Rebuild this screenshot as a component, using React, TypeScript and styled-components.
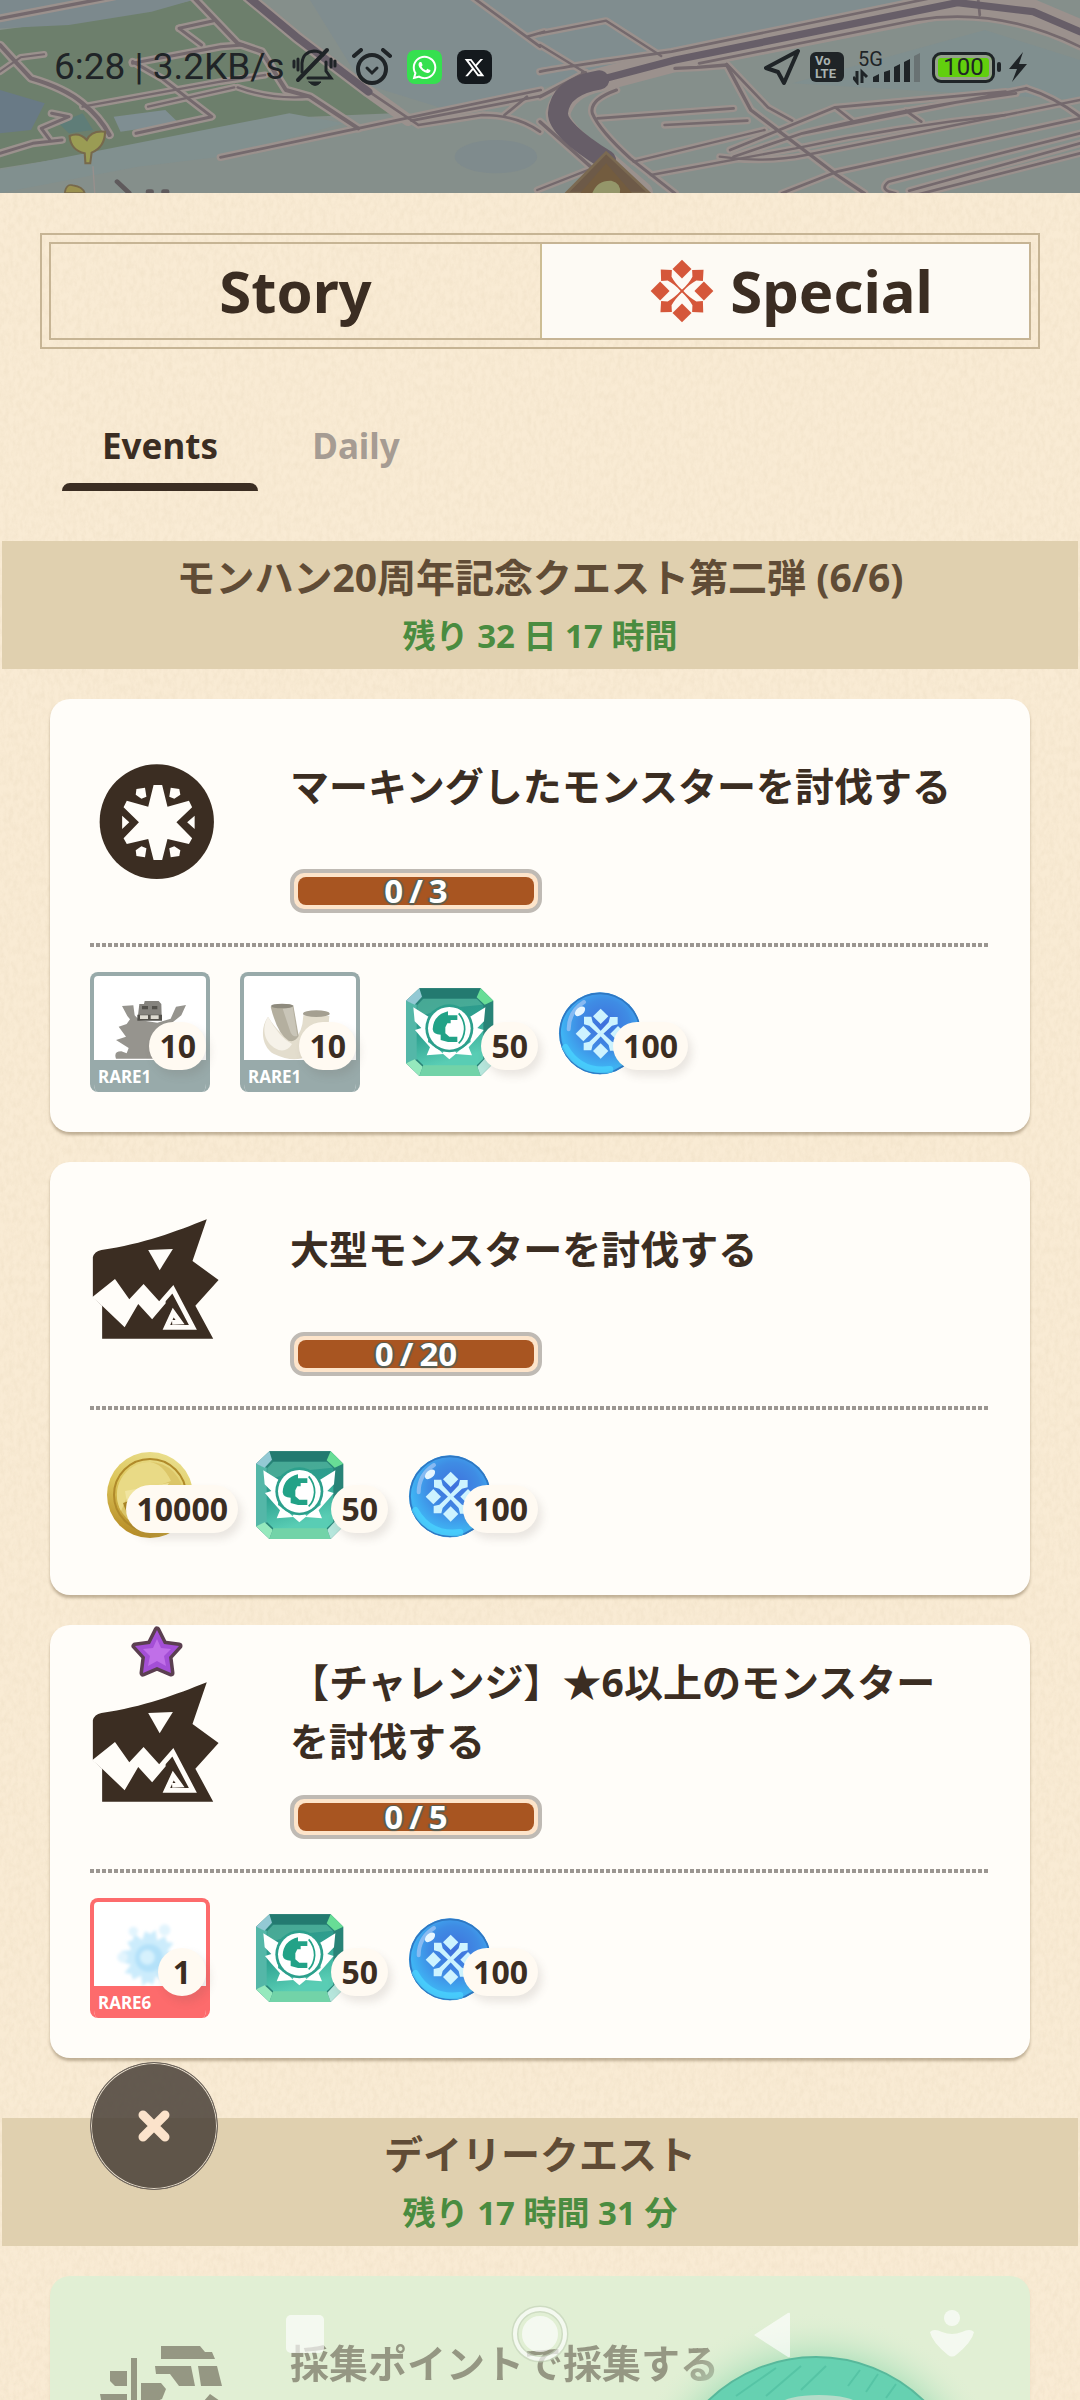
import React from "react";
import styled, { createGlobalStyle } from "styled-components";
import { FaWhatsapp } from "react-icons/fa";
import { RiTwitterXLine } from "react-icons/ri";

const ink = "#3b2d22";
const uiFont = `"Noto Sans", "Noto Sans CJK JP", sans-serif`;

const GlobalStyle = createGlobalStyle`
  *, *::before, *::after { box-sizing: border-box; }
  body { margin: 0; background: #f8ead1; font-family: ${uiFont}; color: ${ink}; }
  button { font: inherit; color: inherit; background: none; border: 0; padding: 0; cursor: pointer; }
  h2, h3, p, ul { margin: 0; padding: 0; }
  svg { display: block; }
`;

const Screen = styled.div`
  position: relative;
  display: flex;
  flex-direction: column;
  height: 100vh;
  overflow: hidden;
`;

const Header = styled.header`
  position: relative;
  flex: none;
  height: 193px;
  overflow: hidden;
  background: #838f8e;
`;

const MapArt = styled.svg`
  position: absolute;
  inset: 0;
  width: 100%;
  height: 100%;
`;

const StatusBar = styled.div`
  position: relative;
  display: flex;
  align-items: center;
  justify-content: space-between;
  padding: 46px 52px 0 54px;
  height: 88px;
  color: #1f2427;
  font-family: Roboto, sans-serif;
`;

const StatusGroup = styled.div<{ $gap: number }>`
  display: flex;
  align-items: center;
  gap: ${(p) => p.$gap}px;
`;

const Clock = styled.span`
  font-size: 37px;
  line-height: 44px;
  white-space: nowrap;
`;

const AppBadge = styled.span<{ $bg: string }>`
  display: grid;
  place-items: center;
  width: 35px;
  height: 34px;
  border-radius: 8px;
  color: #fff;
  background: ${(p) => p.$bg};
`;

const Volte = styled.span`
  display: grid;
  align-content: center;
  width: 34px;
  height: 30px;
  padding-left: 5px;
  border-radius: 6px;
  background: #1f2427;
  color: #a9b2b0;
  font: 700 13px/13px Roboto, sans-serif;
`;

const Network = styled.span`
  position: relative;
  display: block;
  width: 70px;
  height: 36px;
`;

const NetworkLabel = styled.span`
  position: absolute;
  left: 5px;
  top: 0;
  font-size: 20px;
  line-height: 20px;
`;

const Battery = styled.span`
  display: flex;
  align-items: center;
  gap: 2px;

  &::after {
    content: "";
    width: 4px;
    height: 10px;
    border-radius: 2px;
    background: #1f2427;
  }
`;

const BatteryCell = styled.span`
  display: grid;
  place-items: center;
  width: 63px;
  height: 31px;
  border: 3px solid #1f2427;
  border-radius: 9px;
  background: #62cf0d;
  box-shadow: inset 0 0 0 3px #96a08e;
  font-size: 24px;
  line-height: 24px;
`;

const Panel = styled.main`
  position: relative;
  flex: 1;
  min-height: 0;
  display: flex;
  flex-direction: column;
  background: #f9ebd4;
`;

const PaperGrain = styled.svg`
  position: absolute;
  inset: 0;
  width: 100%;
  height: 100%;
  pointer-events: none;
`;

const ModeFrame = styled.div`
  position: relative;
  flex: none;
  margin: 40px 40px 0;
  padding: 7px;
  border: 2px solid #c6b494;
`;

const ModeTabs = styled.div`
  display: grid;
  grid-template-columns: 1fr 1fr;
  border: 2px solid #c6b494;
`;

const ModeTab = styled.button<{ $active?: boolean }>`
  display: flex;
  align-items: center;
  justify-content: center;
  gap: 16px;
  height: 94px;
  font-size: 58px;
  font-weight: 700;
  line-height: 94px;
  background: ${(p) => (p.$active ? "#fdfaf4" : "transparent")};

  & + & {
    border-left: 2px solid #cdbd93;
  }

  & > svg {
    margin-left: 12px;
  }
`;

const SubTabs = styled.nav`
  position: relative;
  flex: none;
  display: flex;
  padding: 0 62px;
  margin: 60px 0 50px;
`;

const SubTab = styled.button<{ $active?: boolean }>`
  min-width: 196px;
  font-size: 35px;
  font-weight: 700;
  line-height: 74px;
  color: ${(p) => (p.$active ? ink : "#a69c93")};

  &::after {
    content: "";
    display: block;
    height: 8px;
    border-radius: 12px 12px 0 0;
    background: ${(p) => (p.$active ? ink : "transparent")};
  }
`;

const QuestScroll = styled.div`
  position: relative;
  flex: 1;
  min-height: 0;
  overflow-y: auto;
  scrollbar-width: none;
`;

const Group = styled.section`
  & + & {
    margin-top: 60px;
  }
`;

const Banner = styled.header`
  margin: 0 2px;
  padding: 6px 16px 4px;
  background: #e0d0af;
  text-align: center;
`;

const BannerTitle = styled.h2`
  font-size: 39px;
  font-weight: 700;
  line-height: 59px;
  color: #604c36;
`;

const TimeLeft = styled.p`
  font-size: 33px;
  font-weight: 700;
  line-height: 59px;
  color: #4a8c40;
`;

const CardList = styled.ul`
  display: grid;
  gap: 30px;
  padding: 30px 50px 0;
  list-style: none;
`;

const Card = styled.li<{ $done?: boolean }>`
  padding: 27px 42px 40px 40px;
  border-radius: 20px;
  background: ${(p) => (p.$done ? "#e1efd4" : "#fffdf9")};
  box-shadow: 0 3px 3px ${(p) => (p.$done ? "rgba(120, 100, 70, 0.1)" : "rgba(110, 90, 60, 0.4)")};

  & > * {
    opacity: ${(p) => (p.$done ? 0.45 : 1)};
  }
`;

const CardTop = styled.div`
  display: grid;
  grid-template-columns: 134px 1fr;
  column-gap: 66px;
  padding-bottom: 34px;
  background: repeating-linear-gradient(90deg, #9b9691 0 4px, transparent 4px 6px) left bottom / 100% 4px no-repeat;
`;

const QuestIcon = styled.div`
  position: relative;
  padding-top: 29px;
`;

const ChallengeStar = styled.svg`
  position: absolute;
  left: 39px;
  top: -27px;
`;

const QuestBody = styled.div`
  display: flex;
  flex-direction: column;
  gap: 25px;
  padding-right: 22px;
`;

const QuestTitle = styled.h3`
  display: flex;
  align-items: center;
  min-height: 118px;
  font-size: 39px;
  font-weight: 700;
  line-height: 59px;
`;

const Meter = styled.div`
  display: grid;
  width: 252px;
  height: 44px;
  padding: 4px;
  border: 4px solid #bfbab4;
  border-radius: 14px;
  background: #fde4ca;
`;

const MeterFill = styled.div`
  display: flex;
  align-items: center;
  justify-content: center;
  gap: 6px;
  border-radius: 8px;
  background: #a85521;
  color: #fff;
  font-size: 33px;
  font-weight: 700;
  line-height: 28px;
  text-shadow: 0 2px 1px #555f55, 2px 0 1px #555f55, -2px 0 1px #555f55, 0 -1px 1px #555f55;
`;

const Rewards = styled.div`
  display: flex;
  padding-top: 25px;
`;

const Slot = styled.div`
  position: relative;
  width: 150px;
  height: 120px;
`;

const Art = styled.svg`
  width: 120px;
  height: 120px;
`;

const Tile = styled.div<{ $tone: string }>`
  display: flex;
  flex-direction: column;
  width: 120px;
  height: 120px;
  overflow: hidden;
  border: 4px solid ${(p) => p.$tone};
  border-bottom: 0;
  border-radius: 8px;
  background: #fff;
`;

const TileArt = styled.svg`
  width: 112px;
  height: 84px;
`;

const Rarity = styled.span<{ $tone: string }>`
  height: 32px;
  padding-left: 4px;
  background: ${(p) => p.$tone};
  color: #fff;
  font-size: 17px;
  font-weight: 700;
  line-height: 34px;
`;

const Count = styled.span<{ $inset: number }>`
  position: absolute;
  right: ${(p) => p.$inset}px;
  bottom: 22px;
  min-width: 48px;
  padding: 0 10px;
  border-radius: 24px;
  background: #fffaf2;
  box-shadow: 4px 6px 8px rgba(90, 80, 70, 0.13);
  font-size: 32px;
  font-weight: 700;
  line-height: 48px;
  text-align: center;
`;

const CloseButton = styled.button`
  position: absolute;
  left: 90px;
  bottom: 210px;
  display: grid;
  place-items: center;
  width: 128px;
  height: 128px;
  border: 1px solid #6b625a;
  border-radius: 50%;
  background: rgba(66, 57, 50, 0.82);
  box-shadow: inset 0 0 0 1px #e6dccb;
`;

const MapOrb = styled.svg`
  position: absolute;
  right: 64px;
  bottom: 0;
  width: 400px;
  height: 100px;
`;

const SystemNav = styled.nav`
  position: absolute;
  left: 0;
  right: 0;
  bottom: 36px;
  display: grid;
  grid-template-columns: 234fr 236fr 228fr 132fr;
  justify-items: center;
  padding: 0 62px 0 188px;
  opacity: 0.66;
`;

const NavButton = styled.button`
  width: 60px;
  height: 60px;
`;

type ArtKind = "fossil" | "bone" | "flower" | "gem" | "orb" | "coin";
type Reward = { art: ArtKind; count: number; rare?: number };
type Quest = { title: string; icon: "mark" | "monster" | "gather"; goal?: number; star?: boolean; done?: boolean; rewards: Reward[] };

const groups: { title: string; left: string; quests: Quest[] }[] = [
  {
    title: "モンハン20周年記念クエスト第二弾 (6/6)",
    left: "残り 32 日 17 時間",
    quests: [
      {
        title: "マーキングしたモンスターを討伐する",
        icon: "mark",
        goal: 3,
        rewards: [
          { art: "fossil", count: 10, rare: 1 },
          { art: "bone", count: 10, rare: 1 },
          { art: "gem", count: 50 },
          { art: "orb", count: 100 },
        ],
      },
      {
        title: "大型モンスターを討伐する",
        icon: "monster",
        goal: 20,
        rewards: [
          { art: "coin", count: 10000 },
          { art: "gem", count: 50 },
          { art: "orb", count: 100 },
        ],
      },
      {
        title: "【チャレンジ】★6以上のモンスターを討伐する",
        icon: "monster",
        goal: 5,
        star: true,
        rewards: [
          { art: "flower", count: 1, rare: 6 },
          { art: "gem", count: 50 },
          { art: "orb", count: 100 },
        ],
      },
    ],
  },
  {
    title: "デイリークエスト",
    left: "残り 17 時間 31 分",
    quests: [{ title: "採集ポイントで採集する", icon: "gather", done: true, rewards: [] }],
  },
];

function Map() {
  const roads: [string, number][] = [
    ["M0 135 L40 180 L90 235 Q190 265 240 310 Q290 350 318 405", 12],
    ["M0 55 L330 -10", 10],
    ["M0 215 L60 172 L128 163", 6],
    ["M560 -10 L690 130 L760 155 L830 270 L900 290 L1040 385", 12],
    ["M385 190 L640 140 L705 135 M520 85 L620 62 M520 85 L585 135", 9],
    ["M240 320 L640 245 L770 225 M430 320 L680 262", 7],
    ["M385 185 L470 235 L615 350 L395 400", 9],
    ["M0 460 L95 430 L180 420 M150 340 L200 350 L120 385 L145 420", 9],
    ["M690 262 Q790 300 900 290", 7],
    ["M640 472 L1040 385 L1570 270 M1195 362 L1570 288", 8],
    ["M1050 260 L1215 375 L1400 345 Q1500 345 1568 395 M1465 345 L1530 290", 8],
    ["M1370 -10 L1568 140 M1530 110 L1580 95", 8],
    ["M1568 100 L1760 62 L1920 168 M1568 135 L1700 218 L1690 218", 7],
    ["M1960 205 L2024 202 L2110 195 L2180 330 L2430 525 L2510 580", 10],
    ["M2110 192 L2230 322 L2300 362 M1735 355 L2130 325 M1930 375 L2170 362", 8],
    ["M1568 290 L1700 218 M1568 365 L1720 505", 10],
    ["M1790 270 Q1710 300 1720 340 Q1740 390 1830 475 L1960 580", 9],
    ["M1840 485 L2220 390 M1890 525 L2310 445 Q2600 380 2920 345 M1720 505 L1560 570", 7],
    ["M2120 450 L2425 322 L2920 275 M2130 470 L2330 400 L2980 265 M2330 400 Q2600 330 2950 280 M2425 322 L2475 362 M2630 332 L2675 365", 8],
    ["M2090 470 Q2220 490 2340 465 L3136 300", 7],
    ["M2270 580 L2430 515 L3136 355 M2600 580 Q2550 570 2580 545 L3136 400 M2640 572 L3136 430 M2640 590 L3136 460", 8],
    ["M1568 215 Q1640 200 1950 155 L2700 -5 M2030 190 L2660 60 Q2900 20 3136 140 M2840 -5 L2845 45", 8],
    ["M2980 265 Q3060 290 3136 350", 9],
  ];
  return (
    <MapArt viewBox="0 0 3136 579" preserveAspectRatio="none" aria-hidden="true">
      <rect width="3136" height="579" fill="#858f8b" />
      <path d="M900 0 H2700 L2000 160 L1300 330 L1050 250 Z" fill="#808d8f" />
      <path d="M2300 250 L2860 90 L3136 180 V300 Z" fill="#808f8f" />
      <path d="M0 90 L440 30 L560 0 L720 0 L1140 340 L900 350 L700 390 L0 505 Z" fill="#6d7f6c" />
      <path d="M0 0 H560 L440 35 L200 75 L0 85 Z" fill="#7c898d" />
      <path d="M0 270 L130 310 L90 390 L0 400 Z" fill="#697a86" />
      <path d="M330 350 L480 330 L520 370 L350 395 Z" fill="#7f8e92" />
      <path d="M170 370 L240 340 L270 390 L200 400 Z" fill="#5f7d78" />
      <path d="M0 510 L840 340 L1000 370 L640 470 L400 500 L0 579 Z" fill="#81908f" />
      <ellipse cx="1440" cy="470" rx="120" ry="50" fill="#7f8b8d" />
      <g fill="none" strokeLinecap="round" strokeLinejoin="round">
        {roads.map(([d, w]) => (
          <path key={d} d={d} stroke="#9b918d" strokeWidth={w + 14} />
        ))}
        <path d="M720 -10 L860 110 L1070 275 L1185 360" stroke="#9b918d" strokeWidth="36" />
        <path d="M3136 95 L3000 35 L2800 8 L1960 180 L1740 240 Q1640 260 1620 340 Q1620 400 1760 490 L1860 579" stroke="#9b918d" strokeWidth="72" />
        {roads.map(([d, w]) => (
          <path key={d} d={d} stroke="#74696d" strokeWidth={w} />
        ))}
        <path d="M720 -10 L860 110 L1070 275" stroke="#675e68" strokeWidth="23" />
        <path d="M3136 95 L3000 35 L2780 8 L1960 180 L1740 240" stroke="#675e68" strokeWidth="22" />
        <path d="M1740 240 Q1625 260 1620 340 Q1620 390 1760 480" stroke="#675e68" strokeWidth="58" />
        <path d="M270 500 L275 579" stroke="#98908d" strokeWidth="4" />
        <path d="M340 545 L375 579 M430 575 h10 M475 575 h10" stroke="#5f5a5c" strokeWidth="14" />
      </g>
      <path d="M202 408 Q230 395 252 420 Q265 390 305 395 Q305 440 266 458 L262 490 H248 L246 460 Q205 450 202 408Z" fill="#9a9c54" stroke="#77694c" strokeWidth="6" />
      <path d="M188 579 Q192 550 212 556 Q240 560 246 579Z" fill="#9a9150" stroke="#77694c" strokeWidth="5" />
      <path d="M1645 579 L1760 458 L1885 579Z" fill="#6d5a48" stroke="#7b6a52" strokeWidth="8" />
      <path d="M1685 579 L1760 490 L1835 579Z" fill="#735c3f" />
      <path d="M1720 579 Q1735 540 1775 542 Q1805 550 1800 579Z" fill="#94966a" />
    </MapArt>
  );
}

function Emblem({ size }: { size: number }) {
  return (
    <svg width={size} height={size} viewBox="-98 -98 196 196" fill="#d5573a" aria-hidden="true">
      {[0, 90, 180, 270].map((r) => (
        <g key={r} transform={`rotate(${r})`}>
          <path d="M0 -96 L29 -67 L0 -38 L-29 -67Z" />
          <path d="M-65 -66 L-31 -64 L-32 -44 Q-22 -24 2 -2 L-2 2 Q-24 -22 -44 -32 L-64 -31Z" />
        </g>
      ))}
    </svg>
  );
}

function MonsterIcon() {
  return (
    <svg width="134" height="134" viewBox="0 0 134 134" aria-hidden="true">
      <g transform="translate(-50 -58) scale(.35714 .33333)">
        <path d="M148 412 V292 Q152 274 172 270 C290 252 380 215 467 178 L427 303 L500 360 L435 437 L485 536 H174 V437Z" fill={ink} />
        <path d="M146 412 L210 357 L250 418 L290 372 L335 425 L350 410 L352 430 L314 478 L275 432 L237 502 L174 437Z" fill="#fffdf9" />
        <path d="M328 442 L372 388 L428 502 H354 L373 458 L392 486 L370 487" fill="none" stroke="#fffdf9" strokeWidth="14" />
        <path d="M303 270 L372 267 L335 331Z" fill="#fffdf9" />
      </g>
    </svg>
  );
}

function MarkIcon() {
  return (
    <svg width="134" height="134" viewBox="0 0 134 134" aria-hidden="true">
      <g transform="translate(-50 -65) scale(.35714 .33333)">
        <ellipse cx="327" cy="395" rx="160" ry="172" fill={ink} />
        <g fill="#fffdf9">
          <path d="M318 285 H342 L357 350 L417 332 L426 352 L382 397 L426 445 L417 462 L357 447 L342 510 H318 L303 447 L243 462 L234 445 L277 397 L234 352 L243 332 L303 350Z" />
          <path d="M270 297 L294 293 L298 320 L284 326 L268 314Z M366 293 L390 297 L393 314 L376 326 L362 320Z M270 498 L294 502 L298 475 L284 469 L268 481Z M366 502 L390 498 L393 481 L376 469 L362 475Z" />
          <path d="M230 377 L250 397 L230 417Z M433 377 L412 397 L433 417Z" />
        </g>
      </g>
    </svg>
  );
}

function GatherIcon() {
  return (
    <svg width="134" height="134" viewBox="0 0 134 134" fill={ink} aria-hidden="true">
      <path d="M71 14 H110 L115 20 H122 L125 27 H71Z M65 34 H101 L105 54 H89 L80 42 H66Z M108 34 H127 L132 54 H111Z M41 26 h6 v80 h-6Z M20 39 H37 V54 H25 L20 49Z M51 51 H71 L76 57 L72 67 L60 72 H51Z M10 62 H37 V84 H14Z M120 62 L140 76 L128 100 L106 78Z M51 78 H100 V100 H51Z" />
    </svg>
  );
}

function RewardArt({ kind }: { kind: ArtKind }) {
  if (kind === "fossil") {
    return (
      <TileArt viewBox="0 0 336 252" aria-hidden="true">
        <path d="M84 90 L118 88 L122 118 L136 132 L190 140 L230 128 L246 92 L276 87 L262 118 L232 142 L210 190 L180 248 H66 Q58 226 82 226 L98 232 L104 216 L66 192 L96 182 L74 152 L98 144 L108 130 L100 120 Z" fill="#96948e" />
        <path d="M136 84 L150 84 L152 75 L194 75 L202 84 L203 118 L132 118Z" fill="#85837e" />
        <path d="M144 90 h18 v10 h-18Z M174 90 h16 v10 h-16Z M130 116 h74 v18 h-74Z" fill="#53514c" />
        <path d="M138 118 h24 v11 h-24Z M170 118 h24 v11 h-24Z" fill="#dedbd2" />
      </TileArt>
    );
  }
  if (kind === "bone") {
    return (
      <TileArt viewBox="0 0 336 252" aria-hidden="true">
        <path d="M72 122 C46 158 54 214 90 234 Q150 262 190 240 Q252 210 256 120 L178 118 Q176 170 150 190 Q112 186 72 122Z" fill="#e3ddcd" />
        <path d="M72 122 C50 160 62 204 104 222 Q130 228 144 204 Q106 184 72 122Z" fill="#f6f2e9" />
        <path d="M80 92 Q108 78 148 88 L164 180 Q152 200 134 194 Q100 174 80 92Z" fill="#b4af9f" />
        <path d="M116 98 L146 92 L160 180 Q148 184 140 170Z" fill="#c9c5b8" />
        <ellipse cx="114" cy="90" rx="33" ry="7" fill="#8e8a7d" />
        <ellipse cx="217" cy="113" rx="40" ry="10" fill="#a49f91" />
      </TileArt>
    );
  }
  if (kind === "flower") {
    return (
      <TileArt viewBox="0 0 336 252" aria-hidden="true">
        <defs>
          <filter id="petalGlow" x="-20%" y="-20%" width="140%" height="140%">
            <feGaussianBlur stdDeviation="5" />
          </filter>
        </defs>
        <g filter="url(#petalGlow)" fill="#ccecfc">
          {[0, 45, 90, 135, 180, 225, 270, 315].map((r) => (
            <path key={r} transform={`translate(165 168) rotate(${r})`} d="M-26 -36 L-12 -80 L4 -72 L20 -84 L26 -36Z" />
          ))}
          <circle cx="118" cy="88" r="14" fill="#e2f4fd" />
          <circle cx="212" cy="84" r="17" fill="#e2f4fd" />
          <circle cx="86" cy="166" r="16" fill="#e2f4fd" />
          <circle cx="165" cy="168" r="42" fill="#b4e1f9" />
          <circle cx="160" cy="166" r="22" fill="#d6f1fd" />
        </g>
      </TileArt>
    );
  }
  if (kind === "gem") {
    return (
      <Art viewBox="0 0 120 120" aria-hidden="true">
        <defs>
          <linearGradient id="gemBody" x1="0" y1="0" x2="0.3" y2="1">
            <stop offset="0" stopColor="#2f9186" />
            <stop offset="0.5" stopColor="#2da190" />
            <stop offset="1" stopColor="#59cdb4" />
          </linearGradient>
        </defs>
        <g transform="translate(-10 -32) scale(.33333)">
          <path d="M118 145 H302 L340 182 V370 L302 408 H118 L78 370 V182Z" fill="#288377" />
          <path d="M118 145 H302 L290 178 H130Z" fill="#237a70" />
          <path d="M78 182 L112 195 V358 L78 370Z" fill="#54b7a8" />
          <path d="M118 408 L130 375 H290 L302 408Z" fill="#72d3a8" />
          <path d="M130 176 H290 L310 196 V356 L290 376 H130 L110 356 V196Z" fill="url(#gemBody)" />
          <path d="M130 176 H290 L308 194 L200 205 L112 230 V196Z" fill="#55b39d" opacity=".65" />
          <path d="M78 182 L118 145 L126 170 L104 194Z" fill="#93c9d4" />
          <path d="M302 145 L340 182 L314 194 L290 172Z" fill="#68dd96" />
          <path d="M78 370 L104 358 L128 380 L118 408Z" fill="#95e9bd" />
          <path d="M340 370 L314 356 L292 380 L302 408Z" fill="#b6e6dc" />
          <g fill="#fff">
            <path d="M100 202 L148 232 L144 306 L178 330 L190 342 L140 346 L150 322 L122 290 L105 270 L124 264 L104 244Z" />
            <path d="M316 202 L268 232 L272 306 L240 330 L226 342 L276 346 L266 322 L294 290 L311 270 L292 264 L312 244Z" />
            <path d="M208 312 L230 340 L208 358 L187 340Z" />
          </g>
          <circle cx="208" cy="265" r="72" fill="#2c9f8c" />
          <circle cx="208" cy="265" r="64" fill="#fff" />
          <path d="M204 214 Q160 225 158 268 Q160 284 182 284 V300 L204 306 H232 V290 H208 L196 280 V262 L202 250 H212 V240 H232 V226 H204Z" fill="#22a287" />
          <path d="M236 220 Q254 240 254 268 Q252 296 236 310" fill="none" stroke="#22a287" strokeWidth="5" />
        </g>
      </Art>
    );
  }
  if (kind === "orb") {
    return (
      <Art viewBox="0 0 120 120" aria-hidden="true">
        <defs>
          <radialGradient id="orbBody" cx="0.55" cy="0.4" r="0.62">
            <stop offset="0" stopColor="#3f6fdc" />
            <stop offset="0.5" stopColor="#3f8ce4" />
            <stop offset="0.85" stopColor="#3fb4f4" />
            <stop offset="1" stopColor="#3b9be0" />
          </radialGradient>
        </defs>
        <g transform="translate(-160 -32) scale(.33333)">
          <circle cx="660" cy="280" r="123" fill="url(#orbBody)" />
          <circle cx="660" cy="280" r="120" fill="none" stroke="#2f77c2" strokeWidth="5" />
          <path d="M556 322 Q600 400 690 388" fill="none" stroke="#4bd6ff" strokeWidth="20" opacity=".7" strokeLinecap="round" />
          <path d="M566 268 Q566 215 612 186" fill="none" stroke="#9ac2f4" strokeWidth="12" opacity=".8" strokeLinecap="round" />
          <ellipse cx="600" cy="214" rx="18" ry="11" transform="rotate(-42 600 214)" fill="#e6f6ff" />
          <g transform="translate(662 281)" fill="#cdf3ff">
            {[0, 90, 180, 270].map((r) => (
              <g key={r} transform={`rotate(${r})`}>
                <path d="M0 -75 L23 -52 L0 -29 L-23 -52Z" />
                <path d="M-50 -51 H-28 L-24 -34 L4 -4 L-4 4 L-34 -24 L-50 -28Z" />
              </g>
            ))}
          </g>
        </g>
      </Art>
    );
  }
  return (
    <Art viewBox="0 0 120 120" aria-hidden="true">
      <defs>
        <linearGradient id="coinBody" x1="0.7" y1="0" x2="0.3" y2="1">
          <stop offset="0" stopColor="#eadf8e" />
          <stop offset="0.5" stopColor="#dcc55a" />
          <stop offset="1" stopColor="#b78c25" />
        </linearGradient>
      </defs>
      <circle cx="60" cy="60" r="43" fill="url(#coinBody)" />
      <circle cx="60" cy="60" r="36" fill="none" stroke="#b08a2a" strokeWidth="2" />
      <circle cx="60" cy="60" r="33" fill="#dcc668" />
      <path d="M60 27 A33 33 0 0 0 31 76 L37 62 L81 46 Q73 29 60 27Z" fill="#e9da86" />
      <path d="M35 56 L79 48 L67 66 L37 68Z" fill="#f1e5a0" />
      <path d="M33 68 L51 62 L57 92 Q39 88 33 68Z" fill="#a98425" />
    </Art>
  );
}

const rareTone: Record<number, string> = { 1: "#98aaaa", 6: "#fd6b6c" };

function RewardItem({ reward }: { reward: Reward }) {
  const tone = reward.rare ? rareTone[reward.rare] : "";
  return (
    <Slot>
      {reward.rare ? (
        <Tile $tone={tone}>
          <RewardArt kind={reward.art} />
          <Rarity $tone={tone}>RARE{reward.rare}</Rarity>
        </Tile>
      ) : (
        <RewardArt kind={reward.art} />
      )}
      <Count $inset={reward.rare ? 34 : 2}>{reward.count}</Count>
    </Slot>
  );
}

function QuestCard({ quest }: { quest: Quest }) {
  return (
    <Card $done={quest.done}>
      <CardTop>
        <QuestIcon>
          {quest.star && (
            <ChallengeStar width="56" height="56" viewBox="0 0 56 56" aria-hidden="true">
              <path d="M28 5 L35 19 L50 21 L40 32 L42 48 L28 42 L14 48 L16 32 L6 21 L21 19Z" fill="#a44fd6" stroke="#5b3f50" strokeWidth="7" strokeLinejoin="round" />
              <path d="M28 5 L35 19 L50 21 L40 32 L42 48 L28 42 L14 48 L16 32 L6 21 L21 19Z" fill="#a44fd6" />
              <path d="M28 14 L32 23 L42 24 L35 31 L37 41 L28 36 L19 41 L21 31 L14 24 L24 23Z" fill="#c06fe8" />
            </ChallengeStar>
          )}
          {quest.icon === "mark" && <MarkIcon />}
          {quest.icon === "monster" && <MonsterIcon />}
          {quest.icon === "gather" && <GatherIcon />}
        </QuestIcon>
        <QuestBody>
          <QuestTitle>{quest.title}</QuestTitle>
          {quest.goal !== undefined && (
            <Meter role="progressbar" aria-valuenow={0} aria-valuemax={quest.goal}>
              <MeterFill>
                <span>0</span>
                <span>/</span>
                <span>{quest.goal}</span>
              </MeterFill>
            </Meter>
          )}
        </QuestBody>
      </CardTop>
      <Rewards>
        {quest.rewards.map((r) => (
          <RewardItem key={r.art} reward={r} />
        ))}
      </Rewards>
    </Card>
  );
}

function Status() {
  return (
    <StatusBar>
      <StatusGroup $gap={15}>
        <StatusGroup $gap={7}>
          <Clock>6:28 | 3.2KB/s</Clock>
          <svg width="45" height="40" viewBox="0 0 45 40" fill="none" stroke="#1f2427" strokeWidth="3" strokeLinecap="round" aria-hidden="true">
            <path d="M10 25 V16 Q11 5 22 4 Q28 4 31 8 M34 15 V24 L39 31 H16" />
            <path d="M6 33 L35 3" strokeWidth="4" />
            <path d="M17 35 H29 Q23 42 17 35Z" fill="#1f2427" strokeWidth="1" />
            <path d="M2 14 V20 M6 12 V23 M39 12 V20 M43 14 V19" />
          </svg>
        </StatusGroup>
        <svg width="40" height="38" viewBox="0 0 40 38" fill="none" stroke="#1f2427" strokeWidth="4" strokeLinecap="round" aria-hidden="true">
          <circle cx="20" cy="21" r="14" />
          <path d="M2 8 L9 2 M31 2 L38 8" />
          <path d="M15 20 L20 25 L25 20" strokeWidth="3" />
        </svg>
        <AppBadge $bg="#35e04f">
          <FaWhatsapp size={27} />
        </AppBadge>
        <AppBadge $bg="#14191d">
          <RiTwitterXLine size={23} />
        </AppBadge>
      </StatusGroup>
      <StatusGroup $gap={9}>
        <svg width="37" height="38" viewBox="0 0 37 38" fill="none" stroke="#1f2427" strokeWidth="4" strokeLinejoin="round" aria-hidden="true">
          <path d="M34 3 L2 20 L14 24 L20 35Z" />
        </svg>
        <Volte>
          <span>Vo</span>
          <span>LTE</span>
        </Volte>
        <Network>
          <NetworkLabel>5G</NetworkLabel>
          <svg width="70" height="36" viewBox="0 0 70 36" fill="#1f2427" aria-hidden="true">
            <path d="M4 22 V33 L0 28 M9 34 V23 L14 28" fill="none" stroke="#1f2427" strokeWidth="3" />
            <path d="M20 33 v-5 l6 -3 v8Z M31 33 v-10 l6 -2 v12Z M41 33 v-15 l6 -3 v18Z M51 33 v-20 l6 -3 v23Z" />
            <path d="M61 33 v-26 l6 -3 v29Z" fill="#697273" />
          </svg>
        </Network>
        <StatusGroup $gap={7}>
          <Battery>
            <BatteryCell>100</BatteryCell>
          </Battery>
          <svg width="20" height="30" viewBox="0 0 20 30" fill="#1f2427" aria-hidden="true">
            <path d="M15 0 L1 17 H9 L4 30 L19 12 H11Z" />
          </svg>
        </StatusGroup>
      </StatusGroup>
    </StatusBar>
  );
}

export default function App() {
  return (
    <Screen>
      <GlobalStyle />
      <Header>
        <Map />
        <Status />
      </Header>
      <Panel>
        <PaperGrain aria-hidden="true">
          <filter id="grain">
            <feTurbulence type="fractalNoise" baseFrequency="0.22 0.13" numOctaves="4" seed="4" />
            <feColorMatrix values="0 0 0 0 0.62  0 0 0 0 0.5  0 0 0 0 0.32  0.7 0 0 0 -0.24" />
          </filter>
          <rect width="100%" height="100%" filter="url(#grain)" opacity="0.35" />
        </PaperGrain>
        <ModeFrame>
          <ModeTabs>
            <ModeTab type="button">Story</ModeTab>
            <ModeTab type="button" $active>
              <Emblem size={64} />
              Special
            </ModeTab>
          </ModeTabs>
        </ModeFrame>
        <SubTabs>
          <SubTab type="button" $active>
            Events
          </SubTab>
          <SubTab type="button">Daily</SubTab>
        </SubTabs>
        <QuestScroll>
          {groups.map((g) => (
            <Group key={g.title}>
              <Banner>
                <BannerTitle>{g.title}</BannerTitle>
                <TimeLeft>{g.left}</TimeLeft>
              </Banner>
              <CardList>
                {g.quests.map((q) => (
                  <QuestCard key={q.title} quest={q} />
                ))}
              </CardList>
            </Group>
          ))}
        </QuestScroll>
      </Panel>
      <MapOrb viewBox="0 0 400 100" aria-hidden="true">
        <defs>
          <radialGradient id="orbGlow">
            <stop offset="0.72" stopColor="#9fdcb4" stopOpacity="0.9" />
            <stop offset="1" stopColor="#e1efd4" stopOpacity="0" />
          </radialGradient>
        </defs>
        <circle cx="200" cy="212" r="200" fill="url(#orbGlow)" />
        <circle cx="200" cy="212" r="155" fill="#66d1b1" stroke="#58b89b" strokeWidth="2" />
        <path d="M120 96 L160 68 M150 96 L185 66 M185 90 L210 66 M250 92 L262 74 M232 86 L244 70 M270 98 L280 84" stroke="#56c4a5" strokeWidth="2" />
        <ellipse cx="203" cy="104" rx="38" ry="9" fill="#b4dcc9" />
      </MapOrb>
      <CloseButton type="button" aria-label="Close">
        <svg width="36" height="36" viewBox="0 0 36 36" stroke="#fbe3cb" strokeWidth="9" strokeLinecap="round" aria-hidden="true">
          <path d="M7 7 L29 29 M29 7 L7 29" />
        </svg>
      </CloseButton>
      <SystemNav>
        <NavButton type="button" aria-label="Recent apps">
          <svg width="60" height="60" viewBox="0 0 60 60" aria-hidden="true">
            <rect x="11" y="11" width="38" height="38" rx="5" fill="#fff" />
          </svg>
        </NavButton>
        <NavButton type="button" aria-label="Home">
          <svg width="60" height="60" viewBox="0 0 60 60" aria-hidden="true">
            <circle cx="30" cy="30" r="25" fill="none" stroke="#c5d3ba" strokeWidth="7" />
            <circle cx="30" cy="30" r="25" fill="none" stroke="#fff" strokeWidth="4" />
            <circle cx="30" cy="30" r="18" fill="#fff" />
          </svg>
        </NavButton>
        <NavButton type="button" aria-label="Back">
          <svg width="60" height="60" viewBox="0 0 60 60" aria-hidden="true">
            <path d="M12 31 L46 9 Q48 8 48 10 V52 Q48 54 46 53Z" fill="#fff" />
          </svg>
        </NavButton>
        <NavButton type="button" aria-label="Accessibility">
          <svg width="60" height="60" viewBox="0 0 60 60" fill="#fff" aria-hidden="true">
            <circle cx="30" cy="14" r="8" />
            <path d="M8 28 Q12 24 20 28 Q30 32 40 28 Q48 24 52 28 Q50 38 34 51 Q30 54 26 51 Q10 38 8 28Z" />
          </svg>
        </NavButton>
      </SystemNav>
    </Screen>
  );
}
